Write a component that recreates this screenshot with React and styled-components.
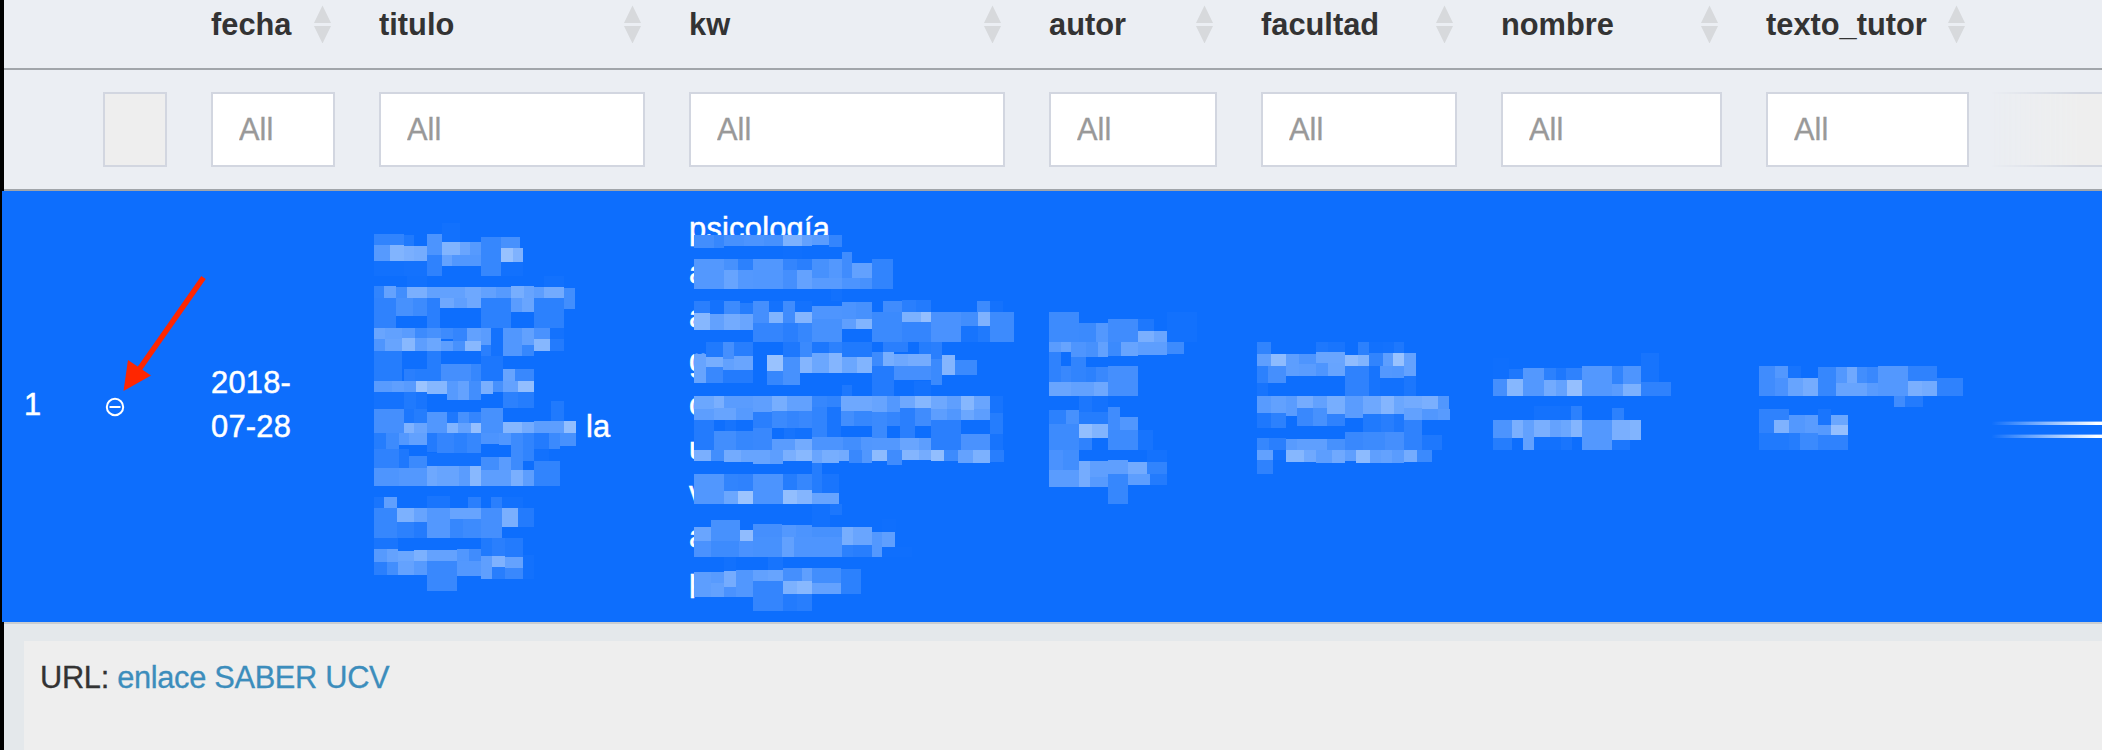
import React from "react";
import styled, { createGlobalStyle } from "styled-components";

const GlobalStyle = createGlobalStyle`
  * { box-sizing: border-box; }
  body {
    margin: 0;
    background: #000;
    font: 30.8px/44px "Liberation Sans", Arial, sans-serif;
    color: #333;
    overflow: hidden;
  }
`;

const Page = styled.main`
  width: 2102px;
  height: 750px;
  padding-left: 4px;
  display: flex;
  flex-direction: column;
  overflow: hidden;
`;

const GridRow = styled.div`
  display: grid;
  flex: none;
  grid-template-columns: 77px 108px 168px 310px 360px 212px 240px 265px 247px 111px;
`;

const HeaderRow = styled(GridRow)`
  height: 70px;
  background: #ebeef3;
  border-bottom: 2px solid #a1a5aa;
`;

const HeaderCell = styled.div`
  padding: 3px 26px 0 22px;
  display: flex;
  justify-content: space-between;
  font-weight: bold;
  white-space: nowrap;
`;

const HeaderLabel = styled.span`
  width: 0;
`;

const SortIcon = styled.svg`
  display: block;
  flex: none;
  width: 17px;
  height: 38px;
  margin-top: 2px;
  fill: #d7d9dc;
`;

const FilterRow = styled(GridRow)`
  height: 121px;
  padding-top: 22px;
  background: #ebeef3;
  border-bottom: 2px solid #a1a5aa;
`;

const FilterCell = styled.div`
  padding: 0 22px;
`;

const FilterInput = styled.input`
  display: block;
  width: 100%;
  height: 75px;
  padding: 0 26px;
  border: 2px solid #d2d6e0;
  border-radius: 0;
  background: ${(p) => (p.disabled ? "#eee" : "#fff")};
  font: inherit;
  outline: none;
  &::placeholder { color: #999; opacity: 1; -webkit-text-stroke: 0.3px #999; }
`;

const FadedInput = styled.div`
  height: 75px;
  border: solid #d2d6e0;
  border-width: 2px 0;
  background: #eee;
  mask-image: linear-gradient(to right, transparent, #000 80%);
`;

const SelectedRow = styled(GridRow)`
  position: relative;
  height: 431px;
  margin-left: -2px;
  grid-template-columns: 79px 108px 168px 310px 360px 212px 240px 265px 247px 111px;
  align-items: center;
  background: #0d6efd;
  color: #fff;
  -webkit-text-stroke: 0.5px #fff;
  letter-spacing: 0.25px;
`;

const Cell = styled.div`
  padding: 0 22px;
  margin-top: -3px;
`;

const TitleCell = styled(Cell)`
  padding: 44px 0 0 229px;
`;

const KeywordLine = styled.div`
  height: 44px;
`;

const ToggleIcon = styled.svg`
  display: block;
  width: 20px;
  height: 20px;
  margin-left: 2px;
  margin-top: 3px;
  fill: none;
  stroke: #fff;
  stroke-width: 2;
`;

const EdgeCell = styled.div`
  display: flex;
  flex-direction: column;
  gap: 9px;
  margin-top: 46px;
`;

const EdgeLine = styled.div`
  height: 4px;
  background: linear-gradient(to right, transparent, #fff 95%);
  mask-image: linear-gradient(rgb(0 0 0 / 40%) 1px, #000 1px);
`;

const Overlay = styled.svg`
  position: absolute;
  left: -2px;
  top: -191px;
  width: 2102px;
  height: 750px;
  pointer-events: none;
`;

const Detail = styled.section`
  flex: 1;
  padding: 17px 0 0 20px;
  border-top: 2px solid #c9cdd1;
  background: #e4e8eb;
`;

const DetailPanel = styled.div`
  height: 100%;
  padding: 15px 16px;
  background: #eee;
  letter-spacing: -0.32px;
  -webkit-text-stroke: 0.3px currentColor;
`;

const Link = styled.a`
  color: #3c8dbc;
  text-decoration: none;
`;

// Redaction tiles: origin, horizontal units per pixel, and tiles as
// left, top, right, bottom, percentage of white. Vertical unit is 1/3 px.
const mosaics = [
  { x: 360, y: 200, s: 3, tiles: `
42 102 132 135 15;132 105 162 138 8;201 102 246 228 26;246 69 300 126 2;42 135 90 183 30;90 135 132 183 48;132 138 162 183 45;162 138 201 183 43;42 183 132 228 2;132 183 201 228 3;201 165 246 228 14;246 126 300 165 48;300 126 330 165 38;330 126 363 165 30;246 165 276 198 36;276 165 363 198 28;363 111 423 228 17;423 111 480 144 24;423 144 459 186 57;459 144 489 186 47;423 186 489 228 2;
142 228 201 261 2;552 228 612 261 2;42 258 72 294 15;72 258 108 294 36;108 261 141 294 22;141 261 201 294 45;201 261 315 294 35;315 261 363 294 40;363 261 408 294 35;408 261 453 294 30;453 258 492 294 44;492 258 522 294 37;522 261 552 294 33;552 261 612 294 42;612 264 645 327 22;42 294 108 384 14;108 294 159 348 24;159 294 201 348 20;201 294 240 384 12;240 294 282 324 40;282 294 321 324 34;321 294 363 324 40;363 294 453 384 13;453 294 486 336 32;486 294 522 336 38;522 294 612 384 13;
42 384 75 417 38;75 384 126 417 35;126 384 165 417 32;165 384 201 417 20;201 384 243 417 24;243 384 279 417 20;279 384 321 423 16;321 384 363 423 35;363 384 393 435 32;393 384 429 468 3;429 384 486 468 28;486 384 522 435 35;522 384 570 417 25;570 384 612 417 3;42 417 75 453 27;75 417 126 453 37;126 414 165 453 51;165 414 201 453 33;201 414 243 453 39;243 423 279 453 33;279 423 315 453 24;315 423 363 453 51;363 435 393 468 12;486 435 522 468 17;522 417 570 453 50;570 417 612 453 9;42 453 126 543 10;126 453 201 507 1;201 453 243 543 10;243 492 333 543 23;333 492 363 543 17;363 468 429 543 6;132 507 165 543 12;165 507 201 543 10;429 507 465 543 37;465 507 522 543 18;
42 543 96 576 31;96 543 132 576 34;132 543 168 576 31;168 543 201 576 59;201 543 261 582 50;261 543 294 600 30;294 543 327 600 36;327 543 363 600 22;363 543 399 582 45;399 543 429 576 24;429 543 474 576 36;474 543 522 576 55;42 576 132 627 3;132 576 168 627 8;168 576 201 627 5;429 576 474 624 13;474 576 522 624 10;573 603 612 663 8;42 627 132 699 23;132 627 162 669 6;162 627 201 669 10;201 636 261 699 28;261 636 294 669 7;294 636 327 669 24;327 636 363 669 16;363 624 429 732 24;132 669 162 699 47;162 669 201 699 38;261 669 294 699 48;294 669 333 699 36;333 669 363 699 56;429 666 486 699 50;486 666 522 699 42;522 663 612 699 33;612 663 648 699 55;
42 699 78 747 10;78 699 117 747 20;117 699 147 735 29;147 699 201 735 35;201 699 231 756 9;231 699 282 759 16;282 699 321 759 13;321 699 363 759 17;363 699 417 732 26;417 699 453 735 28;453 699 489 771 20;489 699 522 783 15;522 699 567 747 9;567 699 600 747 19;600 699 648 738 24;42 747 117 804 14;117 747 147 804 7;147 768 201 804 19;201 759 363 798 2;363 771 417 810 22;417 771 453 810 32;453 771 489 810 20;42 804 117 858 27;117 804 201 858 29;201 798 231 858 40;231 798 297 858 37;297 798 330 858 32;330 798 363 858 51;363 810 453 858 33;453 810 489 858 45;489 810 522 858 33;522 783 600 858 15;522 747 567 783 2;
42 891 72 924 5;72 891 111 924 34;201 888 270 924 5;324 891 363 924 12;393 891 426 924 12;426 891 489 924 2;42 924 111 1014 17;111 924 162 966 46;162 924 201 966 37;201 924 270 1014 29;270 924 363 957 37;363 924 426 1014 23;426 924 474 981 45;474 924 522 981 9;111 966 162 1014 13;162 966 201 1014 9;270 957 309 1014 17;309 957 363 1014 20;42 1014 114 1047 5;363 1014 396 1068 8;396 1014 435 1068 12;435 1014 489 1071 9;42 1047 81 1086 30;81 1047 114 1086 36;114 1053 162 1083 39;162 1050 201 1083 46;201 1050 291 1083 36;291 1047 327 1083 28;327 1047 363 1083 21;363 1068 396 1137 34;396 1068 435 1101 47;435 1071 489 1104 36;42 1086 81 1125 12;81 1086 114 1125 22;114 1083 162 1125 36;162 1083 201 1125 30;201 1083 291 1173 18;291 1083 363 1128 29;396 1101 435 1137 11;435 1104 489 1137 18;489 1065 522 1137 2` },
  { x: 670, y: 190, s: 3, tiles: `
72 135 132 174 22;132 135 162 174 17;162 135 222 168 24;222 135 282 168 26;282 135 339 168 24;339 135 396 168 46;396 135 426 168 35;426 135 477 165 32;477 135 516 171 16;72 207 162 297 29;162 207 204 240 24;204 207 249 240 13;249 207 339 297 28;339 207 381 240 16;381 207 426 240 12;426 207 477 264 24;477 207 516 264 29;516 186 546 264 21;546 219 606 264 35;606 207 669 297 15;162 240 204 297 37;204 240 249 297 29;339 240 381 297 23;381 240 426 297 36;426 264 516 297 31;516 264 570 297 26;570 264 606 297 24;339 168 396 207 1;483 297 516 333 2;
72 333 120 369 12;120 330 162 372 3;162 333 210 372 20;210 339 249 372 10;249 333 297 399 23;297 333 339 366 3;339 333 375 399 21;375 333 426 366 3;426 348 516 387 27;516 336 558 387 26;558 336 606 387 24;639 333 696 366 21;696 330 738 366 12;738 330 783 366 9;921 333 960 366 20;960 333 999 366 3;72 369 120 420 50;120 372 162 420 35;162 372 210 420 42;210 372 249 420 38;297 366 339 399 48;375 366 426 399 49;249 399 339 456 16;339 399 384 456 12;384 399 426 456 17;426 387 516 456 24;516 387 558 417 34;558 387 606 417 48;606 366 696 456 19;696 366 753 396 46;753 366 783 396 56;696 396 783 456 16;783 366 873 456 25;873 366 924 408 22;924 366 960 408 47;960 366 1032 456 20;873 408 924 456 4;924 408 960 456 8;
108 456 159 501 8;159 456 192 507 23;192 456 249 498 11;339 456 390 501 7;390 456 426 501 19;426 456 477 489 6;477 456 516 489 13;516 456 606 501 8;639 456 714 486 12;747 456 783 492 10;783 456 816 507 12;72 492 108 579 37;108 501 159 531 44;159 507 192 540 35;192 498 249 540 38;108 531 159 579 18;159 540 249 579 9;291 495 339 543 58;339 501 390 585 24;291 543 339 585 17;390 501 426 549 49;426 489 477 549 39;477 489 516 549 49;516 501 561 549 39;561 501 606 549 48;606 486 639 528 20;639 486 672 528 44;672 492 714 528 40;714 492 783 528 43;783 507 816 585 19;816 495 855 555 49;855 510 921 555 19;606 528 672 618 9;672 528 783 570 23;516 585 546 618 7;
732 573 783 618 3;72 618 132 657 39;132 618 162 654 45;162 618 249 660 32;249 618 306 666 34;306 618 351 663 44;351 618 426 663 35;426 618 471 651 17;471 618 513 651 15;513 618 606 663 40;606 618 651 666 37;651 618 690 666 29;690 618 735 654 40;735 618 783 654 50;783 618 831 657 40;831 618 873 657 34;873 618 912 660 50;912 618 960 657 38;960 618 999 669 4` },
  { x: 670, y: 400, s: 3, tiles: `
72 27 132 60 33;132 24 198 60 37;198 24 249 60 30;249 36 306 84 12;306 33 351 84 19;351 33 387 84 16;387 33 426 84 18;426 21 471 111 15;471 21 513 111 5;513 33 552 78 22;552 33 606 78 17;606 36 651 114 19;651 36 690 78 16;690 24 735 114 12;735 24 783 78 21;783 27 831 60 33;831 27 873 60 28;873 30 912 60 39;912 27 960 60 33;960 39 999 102 10;960 102 999 150 4;72 60 132 150 9;132 60 165 93 1;165 60 198 93 4;198 60 249 93 1;132 93 198 150 22;198 93 249 150 17;249 84 306 150 18;342 84 375 117 4;375 84 426 117 2;306 117 375 150 32;375 117 426 150 42;426 111 519 150 26;519 111 573 150 22;573 111 606 150 28;606 114 690 150 29;690 114 747 150 38;747 114 783 150 33;783 60 873 150 12;873 102 960 150 25;
72 150 123 183 45;123 150 162 183 22;162 150 213 186 42;213 150 249 186 37;249 150 300 192 37;300 150 339 192 33;339 150 378 183 45;378 150 426 183 51;426 150 456 189 38;456 150 507 189 44;507 150 537 183 42;537 150 576 189 18;576 150 606 189 28;606 150 651 183 53;651 150 696 195 21;696 150 747 180 49;747 150 783 180 43;783 150 822 183 55;822 150 864 183 20;864 150 909 189 36;909 150 960 189 46;960 150 1002 186 11;426 189 456 279 10;456 222 507 279 5;
72 222 162 312 28;162 222 204 273 15;204 222 249 273 14;249 222 339 312 26;339 222 381 270 10;381 222 426 270 17;162 273 204 312 39;204 273 249 312 59;339 270 381 312 55;381 270 426 312 49;426 279 507 312 37;426 312 480 381 2;480 312 516 345 6;72 381 123 423 38;123 360 210 423 24;210 390 249 423 54;249 372 336 411 23;336 375 378 411 29;378 375 426 411 26;426 381 516 471 24;516 381 549 435 44;549 381 606 435 38;606 396 636 471 29;636 396 675 441 34;72 423 123 471 25;123 423 207 471 20;207 423 249 471 25;249 411 336 471 24;336 411 372 471 35;372 411 516 471 27;516 435 549 471 13;549 435 606 471 11;636 441 726 471 1;636 357 678 396 1;162 471 198 513 2;294 471 339 510 4;
72 516 123 591 33;123 516 162 549 31;123 549 162 591 35;162 513 198 561 43;162 561 198 591 25;198 510 249 591 28;249 510 294 543 35;294 510 339 543 37;339 504 396 543 23;396 504 426 543 34;426 504 513 549 22;513 507 573 582 13;249 543 339 633 16;339 543 381 582 46;381 543 426 582 51;426 549 513 582 36;339 582 381 633 9;381 582 426 633 11` },
  { x: 1030, y: 290, s: 3, tiles: `
57 66 147 156 20;147 99 198 156 19;198 99 234 156 29;234 87 324 156 21;324 87 372 123 7;324 123 372 156 45;372 123 411 156 38;411 66 501 156 2;57 156 93 186 32;93 156 123 186 37;123 156 168 201 27;168 156 204 201 24;204 156 234 201 35;234 156 273 198 19;273 156 324 198 37;324 156 411 195 33;411 156 462 192 20;57 186 93 276 14;93 228 123 276 18;123 201 168 276 15;168 231 198 276 13;198 231 234 276 18;234 228 324 318 23;57 276 123 318 38;123 276 192 318 35;192 276 234 318 40;147 318 186 366 6;186 318 234 366 3;57 360 108 402 13;108 360 147 402 24;147 366 234 402 10;234 351 270 420 21;270 381 324 420 28;57 402 147 480 20;147 402 186 444 55;186 402 234 444 48;147 444 186 480 14;234 420 324 480 20;324 420 369 480 4;57 480 99 540 25;99 480 147 540 22;147 513 180 591 43;180 513 234 561 34;180 561 234 591 30;57 540 147 591 32;234 510 294 552 34;294 516 351 552 42;294 552 360 585 33;351 516 411 552 15;360 552 411 585 9;351 480 411 516 3;234 552 294 642 17;
681 156 723 192 15;858 156 894 186 7;894 156 945 186 5;984 156 1017 195 13;1017 156 1059 189 2;1059 156 1092 189 3;1092 156 1122 189 7;681 192 723 228 34;723 192 768 228 53;768 192 807 258 33;807 192 858 222 27;858 186 945 219 38;945 195 984 228 54;984 195 1017 228 48;1017 189 1059 228 15;1059 189 1089 228 33;1089 189 1122 228 58;1122 189 1158 258 36;681 228 714 279 13;714 228 768 279 23;807 222 858 258 32;858 219 894 258 27;894 219 945 258 37;945 228 1017 318 14;1017 228 1050 318 4;1050 228 1086 264 29;1086 228 1122 264 28;681 279 714 318 4;1050 264 1122 318 2;1122 258 1158 318 6;681 318 723 369 31;723 318 768 369 35;768 318 801 378 32;801 318 849 354 43;849 318 891 354 35;891 318 945 372 44;945 318 999 384 32;999 318 1053 372 40;1053 318 1092 372 49;1092 318 1122 372 39;1122 318 1176 354 42;1176 318 1224 357 45;1224 318 1257 357 28;1122 354 1176 390 35;1176 357 1224 390 28;1224 357 1260 390 31;681 369 723 414 7;723 369 768 414 13;801 354 849 408 18;849 354 891 408 24;891 372 945 408 14;999 372 1053 426 8;1053 372 1092 426 11;1092 372 1122 426 7;1122 390 1176 480 14;1176 435 1236 480 7;681 444 717 480 17;717 444 768 480 12;768 447 801 480 31;801 447 891 480 34;891 447 945 480 24;945 426 999 480 18;999 426 1065 480 20;1065 426 1122 480 23;681 480 729 510 35;729 480 768 510 3;768 480 822 516 50;822 480 858 516 41;858 480 906 519 33;906 480 945 519 41;945 480 978 513 34;978 480 1020 519 53;1020 480 1053 519 34;1053 480 1086 519 36;1086 480 1122 519 32;1122 480 1161 516 43;1161 480 1206 516 19;681 510 729 552 14` },
  { x: 1470, y: 330, s: 2.481, tiles: `
57 84 97 147 1;97 117 131 147 7;131 114 184 198 29;184 114 213 150 13;213 114 238 150 7;238 114 278 150 14;278 108 352 198 29;352 108 380 162 15;380 108 424 162 27;424 69 469 156 4;57 147 92 198 23;92 147 131 198 50;184 150 213 198 42;213 150 241 198 36;241 150 278 198 56;352 162 380 198 32;380 162 424 198 46;424 156 499 198 14;159 228 223 270 3;223 228 251 270 2;251 228 278 270 13;352 234 382 270 13;57 270 104 324 26;104 270 131 324 45;131 270 159 360 35;159 270 198 321 45;198 270 225 321 36;225 270 251 321 39;251 270 278 321 49;278 270 352 360 29;352 270 397 330 45;397 270 424 330 48;57 324 104 360 10;159 321 225 360 2;225 321 253 360 5;352 330 397 360 6;
717 108 757 198 21;757 108 789 144 29;789 108 821 144 4;757 144 789 198 25;789 144 826 198 37;826 144 863 198 43;863 111 908 198 17;908 111 935 159 29;935 111 960 159 41;960 111 985 159 22;985 111 1012 159 18;908 159 985 198 37;985 159 1012 198 31;1012 108 1087 198 29;1087 108 1159 153 14;1087 153 1121 198 45;1121 153 1159 198 42;1159 144 1223 198 14;1052 198 1079 231 21;1079 198 1124 231 9;717 237 791 309 14;754 270 791 309 47;791 255 830 309 29;830 255 863 309 32;863 237 896 285 5;896 255 938 285 39;863 285 896 315 30;896 285 938 315 56;717 309 791 360 8;791 309 819 360 10;819 309 863 360 19;863 315 938 360 14` },
];

const mix = (from, p) => Math.round(from + ((255 - from) * p) / 100);
const tileColor = (p) => `rgb(${mix(13, p)},${mix(110, p)},${mix(253, p)})`;

function Mosaic({ x, y, s, tiles }) {
  return (
    <g shapeRendering="crispEdges">
      {tiles.trim().split(";").map((tile, i) => {
        const [l, t, r, b, p] = tile.trim().split(/\s+/).map(Number);
        const left = x + Math.round(l / s);
        const top = y + Math.round(t / 3);
        return (
          <rect
            key={i}
            x={left}
            y={top}
            width={x + Math.round(r / s) - left}
            height={y + Math.round(b / 3) - top}
            fill={tileColor(p)}
          />
        );
      })}
    </g>
  );
}

const columns = ["fecha", "titulo", "kw", "autor", "facultad", "nombre", "texto_tutor"];
const keywords = ["psicología", "a", "a", "g", "c", "u", "v", "a", "p"];

export default function App() {
  return (
    <>
      <GlobalStyle />
      <Page>
        <HeaderRow>
          <div />
          <div />
          {columns.map((name) => (
            <HeaderCell key={name}>
              <HeaderLabel>{name}</HeaderLabel>
              <SortIcon viewBox="0 0 17 38">
                <path d="M8.5 0.5 17 18H0zM0 21h17L8.5 38.5z" />
              </SortIcon>
            </HeaderCell>
          ))}
          <div />
        </HeaderRow>
        <FilterRow>
          <div />
          <FilterCell>
            <FilterInput disabled />
          </FilterCell>
          {columns.map((name) => (
            <FilterCell key={name}>
              <FilterInput placeholder="All" aria-label={name} />
            </FilterCell>
          ))}
          <FadedInput />
        </FilterRow>
        <SelectedRow>
          <Cell>1</Cell>
          <Cell>
            <ToggleIcon viewBox="0 0 20 20">
              <circle cx="10" cy="10" r="8.2" />
              <path d="M4.5 10h11" />
            </ToggleIcon>
          </Cell>
          <Cell>
            2018-
            <br />
            07-28
          </Cell>
          <TitleCell>la</TitleCell>
          <Cell>
            {keywords.map((word, i) => (
              <KeywordLine key={i}>{word}</KeywordLine>
            ))}
          </Cell>
          <div />
          <div />
          <div />
          <div />
          <EdgeCell>
            <EdgeLine />
            <EdgeLine />
          </EdgeCell>
          <Overlay viewBox="0 0 2102 750">
            {mosaics.map((m, i) => (
              <Mosaic key={i} {...m} />
            ))}
            <path d="M203.5 277.5 138 371" stroke="#ff2600" strokeWidth="5.5" />
            <path d="M128 360 151 375.5 123.5 391z" fill="#ff2600" />
          </Overlay>
        </SelectedRow>
        <Detail>
          <DetailPanel>
            URL: <Link>enlace SABER UCV</Link>
          </DetailPanel>
        </Detail>
      </Page>
    </>
  );
}
